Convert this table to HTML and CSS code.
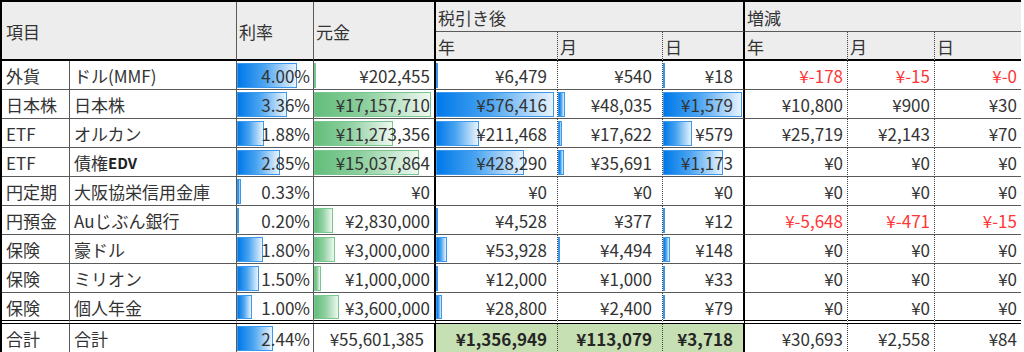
FILE: index.html
```html
<!DOCTYPE html>
<html lang="ja">
<head>
<meta charset="utf-8">
<title>資産一覧</title>
<link rel="stylesheet" href="styles.css">
</head>
<body>
<div class="sheet">
  <div class="head">
    <div class="c h lbl span-item">項目</div>
    <div class="c h lbl span-rate">利率</div>
    <div class="c h lbl span-base">元金</div>
    <div class="c h lbl grp-net">税引き後</div>
    <div class="c h lbl grp-diff">増減</div>
    <div class="c h lbl sub dot">年</div>
    <div class="c h lbl sub dot">月</div>
    <div class="c h lbl sub thick">日</div>
    <div class="c h lbl sub dot">年</div>
    <div class="c h lbl sub dot">月</div>
    <div class="c h lbl sub end">日</div>
  </div>

  <div class="row">
    <div class="c txt thin">外貨</div>
    <div class="c txt thin">ドル(MMF)</div>
    <div class="c num thin"><span class="bar blue" style="width:60px"></span><span class="v">4.00%</span></div>
    <div class="c num thick"><span class="bar green" style="width:2px"></span><span class="v">¥202,455</span></div>
    <div class="c num pad dot"><span class="bar blue" style="width:2px"></span><span class="v">¥6,479</span></div>
    <div class="c num pad dot"><span class="v">¥540</span></div>
    <div class="c num pad thick"><span class="bar blue" style="width:1px"></span><span class="v">¥18</span></div>
    <div class="c num dot neg"><span class="v">¥-178</span></div>
    <div class="c num dot neg"><span class="v">¥-15</span></div>
    <div class="c num end neg"><span class="v">¥-0</span></div>
  </div>

  <div class="row">
    <div class="c txt thin">日本株</div>
    <div class="c txt thin">日本株</div>
    <div class="c num thin"><span class="bar blue" style="width:50px"></span><span class="v">3.36%</span></div>
    <div class="c num thick"><span class="bar green" style="width:117px"></span><span class="v">¥17,157,710</span></div>
    <div class="c num pad dot"><span class="bar blue" style="width:118px"></span><span class="v">¥576,416</span></div>
    <div class="c num pad dot"><span class="bar blue" style="width:7px"></span><span class="v">¥48,035</span></div>
    <div class="c num pad thick"><span class="bar blue" style="width:79px"></span><span class="v">¥1,579</span></div>
    <div class="c num dot"><span class="v">¥10,800</span></div>
    <div class="c num dot"><span class="v">¥900</span></div>
    <div class="c num end"><span class="v">¥30</span></div>
  </div>

  <div class="row">
    <div class="c txt thin">ETF</div>
    <div class="c txt thin">オルカン</div>
    <div class="c num thin"><span class="bar blue" style="width:27px"></span><span class="v">1.88%</span></div>
    <div class="c num thick"><span class="bar green" style="width:79px"></span><span class="v">¥11,273,356</span></div>
    <div class="c num pad dot"><span class="bar blue" style="width:43px"></span><span class="v">¥211,468</span></div>
    <div class="c num pad dot"><span class="bar blue" style="width:4px"></span><span class="v">¥17,622</span></div>
    <div class="c num pad thick"><span class="bar blue" style="width:29px"></span><span class="v">¥579</span></div>
    <div class="c num dot"><span class="v">¥25,719</span></div>
    <div class="c num dot"><span class="v">¥2,143</span></div>
    <div class="c num end"><span class="v">¥70</span></div>
  </div>

  <div class="row">
    <div class="c txt thin">ETF</div>
    <div class="c txt thin">債権<span class="latin">EDV</span></div>
    <div class="c num thin"><span class="bar blue" style="width:43px"></span><span class="v">2.85%</span></div>
    <div class="c num thick"><span class="bar green" style="width:105px"></span><span class="v">¥15,037,864</span></div>
    <div class="c num pad dot"><span class="bar blue" style="width:88px"></span><span class="v">¥428,290</span></div>
    <div class="c num pad dot"><span class="bar blue" style="width:6px"></span><span class="v">¥35,691</span></div>
    <div class="c num pad thick"><span class="bar blue" style="width:60px"></span><span class="v">¥1,173</span></div>
    <div class="c num dot"><span class="v">¥0</span></div>
    <div class="c num dot"><span class="v">¥0</span></div>
    <div class="c num end"><span class="v">¥0</span></div>
  </div>

  <div class="row">
    <div class="c txt thin">円定期</div>
    <div class="c txt thin">大阪協栄信用金庫</div>
    <div class="c num thin"><span class="bar blue" style="width:4px"></span><span class="v">0.33%</span></div>
    <div class="c num thick"><span class="v">¥0</span></div>
    <div class="c num pad dot"><span class="v">¥0</span></div>
    <div class="c num pad dot"><span class="v">¥0</span></div>
    <div class="c num pad thick"><span class="v">¥0</span></div>
    <div class="c num dot"><span class="v">¥0</span></div>
    <div class="c num dot"><span class="v">¥0</span></div>
    <div class="c num end"><span class="v">¥0</span></div>
  </div>

  <div class="row">
    <div class="c txt thin">円預金</div>
    <div class="c txt thin">Auじぶん銀行</div>
    <div class="c num thin"><span class="bar blue" style="width:2px"></span><span class="v">0.20%</span></div>
    <div class="c num thick"><span class="bar green" style="width:19px"></span><span class="v">¥2,830,000</span></div>
    <div class="c num pad dot"><span class="bar blue" style="width:1px"></span><span class="v">¥4,528</span></div>
    <div class="c num pad dot"><span class="v">¥377</span></div>
    <div class="c num pad thick"><span class="bar blue" style="width:1px"></span><span class="v">¥12</span></div>
    <div class="c num dot neg"><span class="v">¥-5,648</span></div>
    <div class="c num dot neg"><span class="v">¥-471</span></div>
    <div class="c num end neg"><span class="v">¥-15</span></div>
  </div>

  <div class="row">
    <div class="c txt thin">保険</div>
    <div class="c txt thin">豪ドル</div>
    <div class="c num thin"><span class="bar blue" style="width:26px"></span><span class="v">1.80%</span></div>
    <div class="c num thick"><span class="bar green" style="width:21px"></span><span class="v">¥3,000,000</span></div>
    <div class="c num pad dot"><span class="bar blue" style="width:11px"></span><span class="v">¥53,928</span></div>
    <div class="c num pad dot"><span class="bar blue" style="width:1px"></span><span class="v">¥4,494</span></div>
    <div class="c num pad thick"><span class="bar blue" style="width:7px"></span><span class="v">¥148</span></div>
    <div class="c num dot"><span class="v">¥0</span></div>
    <div class="c num dot"><span class="v">¥0</span></div>
    <div class="c num end"><span class="v">¥0</span></div>
  </div>

  <div class="row">
    <div class="c txt thin">保険</div>
    <div class="c txt thin">ミリオン</div>
    <div class="c num thin"><span class="bar blue" style="width:22px"></span><span class="v">1.50%</span></div>
    <div class="c num thick"><span class="bar green" style="width:7px"></span><span class="v">¥1,000,000</span></div>
    <div class="c num pad dot"><span class="bar blue" style="width:2px"></span><span class="v">¥12,000</span></div>
    <div class="c num pad dot"><span class="v">¥1,000</span></div>
    <div class="c num pad thick"><span class="bar blue" style="width:1px"></span><span class="v">¥33</span></div>
    <div class="c num dot"><span class="v">¥0</span></div>
    <div class="c num dot"><span class="v">¥0</span></div>
    <div class="c num end"><span class="v">¥0</span></div>
  </div>

  <div class="row last">
    <div class="c txt thin">保険</div>
    <div class="c txt thin">個人年金</div>
    <div class="c num thin"><span class="bar blue" style="width:15px"></span><span class="v">1.00%</span></div>
    <div class="c num thick"><span class="bar green" style="width:25px"></span><span class="v">¥3,600,000</span></div>
    <div class="c num pad dot"><span class="bar blue" style="width:6px"></span><span class="v">¥28,800</span></div>
    <div class="c num pad dot"><span class="v">¥2,400</span></div>
    <div class="c num pad thick"><span class="bar blue" style="width:2px"></span><span class="v">¥79</span></div>
    <div class="c num dot"><span class="v">¥0</span></div>
    <div class="c num dot"><span class="v">¥0</span></div>
    <div class="c num end"><span class="v">¥0</span></div>
  </div>

  <div class="row total">
    <div class="c txt thin">合計</div>
    <div class="c txt thin">合計</div>
    <div class="c num thin"><span class="bar blue" style="width:36px"></span><span class="v">2.44%</span></div>
    <div class="c num pad thick"><span class="v">¥55,601,385</span></div>
    <div class="c num pad dot sum"><span class="v">¥1,356,949</span></div>
    <div class="c num pad dot sum"><span class="v">¥113,079</span></div>
    <div class="c num pad thick sum"><span class="v">¥3,718</span></div>
    <div class="c num dot"><span class="v">¥30,693</span></div>
    <div class="c num dot"><span class="v">¥2,558</span></div>
    <div class="c num end"><span class="v">¥84</span></div>
  </div>
</div>
</body>
</html>
```
FILE: styles.css
```css
html, body {
  margin: 0;
  padding: 0;
  background: #ffffff;
  overflow: hidden;
}

body {
  font-family: "Noto Sans CJK JP", "Noto Sans", sans-serif;
  font-size: 17px;
  color: #333333;
}

.sheet {
  display: flex;
  flex-direction: column;
  width: max-content;
  border-left: 2px solid #000;
  border-top: 2px solid #000;
}

.head,
.row {
  display: grid;
  grid-template-columns: 68px 167px 77px 122px 122px 105px 82px 103px 87px 86px;
}

.head {
  grid-template-rows: 30px 29px;
  background: #ededed;
}

.row {
  height: 29px;
}

.row.last {
  height: 31px;
}

.c {
  box-sizing: border-box;
  position: relative;
  display: flex;
  align-items: center;
  white-space: nowrap;
  overflow: hidden;
  border-bottom: 1px solid #5a5a5a;
  line-height: 1;
}

.row.last .c {
  border-bottom: 4px double #000;
}

/* right borders */
.thin { border-right: 1px solid #5a5a5a; }
.thick { border-right: 2px solid #000; }
.dot { border-right: 1px dotted #444; }
.end { border-right: none; }

/* header */
.h {
  padding-left: 2px;
  padding-top: 1px;
}

.span-item {
  grid-column: 1 / 3;
  grid-row: 1 / 3;
  border-right: 1px solid #5a5a5a;
  border-bottom: 2px solid #000;
  padding-left: 4px;
}

.span-rate {
  grid-column: 3;
  grid-row: 1 / 3;
  border-right: 1px solid #5a5a5a;
  border-bottom: 2px solid #000;
}

.span-base {
  grid-column: 4;
  grid-row: 1 / 3;
  border-right: 2px solid #000;
  border-bottom: 2px solid #000;
}

.grp-net {
  grid-column: 5 / 8;
  grid-row: 1;
  border-right: 2px solid #000;
}

.grp-diff {
  grid-column: 8 / 11;
  grid-row: 1;
}

.sub {
  grid-row: 2;
  border-bottom: 2px solid #000;
}

/* body cells */
.txt {
  padding-left: 4px;
  padding-top: 1px;
}

.num {
  justify-content: flex-end;
  padding-right: 4px;
  padding-top: 1px;
}

.num.thin {
  padding-right: 3px;
}

.num.pad {
  padding-right: 10px;
}

.v {
  position: relative;
  z-index: 1;
}

.neg {
  color: #ff3636;
}

.sum {
  background: #c6e0b4;
  font-weight: 700;
  color: #262626;
}

.latin {
  font-weight: 700;
  font-size: 15px;
  color: #222;
}

/* data bars */
.bar {
  position: absolute;
  left: 0;
  top: 2px;
  bottom: 1px;
  box-sizing: border-box;
}

.bar.blue {
  background: linear-gradient(90deg, #0079ea 0%, #4aa4f0 45%, #e9f3fd 100%);
  border: 1px solid #3b98ec;
}

.bar.green {
  background: linear-gradient(90deg, #63be7b 0%, #8fd0a0 45%, #eef8f1 100%);
  border: 1px solid #79c78e;
}
```
